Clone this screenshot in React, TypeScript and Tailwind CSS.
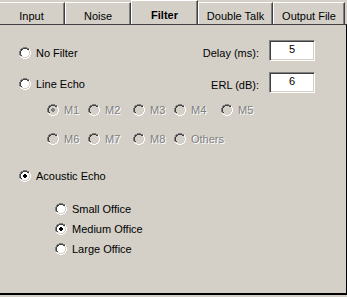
import React from "react"

const FONT = { fontFamily: '"Liberation Sans", Arial, sans-serif' }

// classic 12x12 radio bitmap
const RADIO_MAP = [
  "....DDDD....",
  "..DDKKKKDD..",
  ".DKKFFFFKKW.",
  ".DKFFFFFFLW.",
  "DKFFFFFFFFLW",
  "DKFFFFFFFFLW",
  "DKFFFFFFFFLW",
  "DKFFFFFFFFLW",
  ".DKFFFFFFLW.",
  ".WLLFFFFLLW.",
  "..WWLLLLWW..",
  "....WWWW....",
]

const DOT = [
  [5, 4], [6, 4],
  [4, 5], [5, 5], [6, 5], [7, 5],
  [4, 6], [5, 6], [6, 6], [7, 6],
  [5, 7], [6, 7],
]

function RadioIcon({ checked, disabled }: { checked?: boolean; disabled?: boolean }) {
  const colors: Record<string, string> = {
    D: "#808080",
    K: "#404040",
    W: "#ffffff",
    L: "#d4d0c8",
    F: disabled ? "#d4d0c8" : "#ffffff",
  }
  const rects: React.ReactNode[] = []
  RADIO_MAP.forEach((row, y) => {
    row.split("").forEach((c, x) => {
      if (c !== ".") rects.push(<rect key={`${x}-${y}`} x={x} y={y} width={1} height={1} fill={colors[c]} />)
    })
  })
  return (
    <svg width={12} height={12} viewBox="0 0 12 12" shapeRendering="crispEdges" className="shrink-0">
      {rects}
      {checked &&
        DOT.map(([x, y]) => (
          <rect key={`d${x}-${y}`} x={x} y={y} width={1} height={1} fill={disabled ? "#808080" : "#000000"} />
        ))}
    </svg>
  )
}

function Radio({ label, checked, disabled, width }: { label: string; checked?: boolean; disabled?: boolean; width?: string }) {
  return (
    <div className={`flex items-center gap-[5px] h-[12px] ${width ?? ""}`}>
      <RadioIcon checked={checked} disabled={disabled} />
      <span
        className={`text-[11px] leading-[12px] whitespace-nowrap ${disabled ? "text-[#808080] [text-shadow:1px_1px_0_#ffffff]" : "text-black"}`}
      >
        {label}
      </span>
    </div>
  )
}

function NumberField({ label, value }: { label: string; value: string }) {
  return (
    <div className="flex items-start gap-[10px]">
      <span className="text-[11px] leading-[12px] mt-[7px] text-black">{label}</span>
      <div className="w-[46px] h-[21px] bg-white border border-t-[#808080] border-l-[#808080] border-b-white border-r-white shadow-[inset_1px_1px_0_#404040,inset_-1px_-1px_0_#d4d0c8] flex items-center justify-center text-[11px] text-black pb-[2px]">
        {value}
      </div>
    </div>
  )
}

const tabs = [
  { label: "Input", w: "w-[67px] -ml-[2px]" },
  { label: "Noise", w: "w-[66px]" },
  { label: "Filter", w: "w-[67px]", active: true },
  { label: "Double Talk", w: "w-[75px]" },
  { label: "Output File", w: "w-[72px]" },
]

export default function App() {
  return (
    <div className="w-[347px] h-[297px] bg-[#d4d0c8] overflow-hidden flex flex-col select-none" style={FONT}>
      {/* Tabs */}
      <div className="flex items-end h-[24px]">
        {tabs.map((t) => (
          <div
            key={t.label}
            className={`${t.w} ${t.active ? "h-[24px] font-bold" : "h-[22px]"} shrink-0 border-t border-l border-t-white border-l-white border-r border-r-[#404040] shadow-[inset_-1px_0_0_#808080] flex items-center justify-center pt-[4px] text-[11px] leading-[12px] text-black`}
          >
            {t.label}
          </div>
        ))}
      </div>

      {/* Page body */}
      <div className="h-[271px] border-t border-t-[#404040] border-r border-r-black border-b-2 border-b-black pl-[19px] pr-[31px] pt-[15px] flex flex-col">
        <div className="flex items-start justify-between h-[21px]">
          <div className="mt-[7px]">
            <Radio label="No Filter" />
          </div>
          <NumberField label="Delay (ms):" value="5" />
        </div>

        <div className="flex items-start justify-between h-[21px] mt-[11px]">
          <div className="mt-[6px]">
            <Radio label="Line Echo" />
          </div>
          <NumberField label="ERL (dB):" value="6" />
        </div>

        <div className="flex pl-[28px] mt-[11px]">
          <Radio label="M1" checked disabled width="w-[41px]" />
          <Radio label="M2" disabled width="w-[45px]" />
          <Radio label="M3" disabled width="w-[41px]" />
          <Radio label="M4" disabled width="w-[47px]" />
          <Radio label="M5" disabled />
        </div>

        <div className="flex pl-[28px] mt-[17px]">
          <Radio label="M6" disabled width="w-[41px]" />
          <Radio label="M7" disabled width="w-[45px]" />
          <Radio label="M8" disabled width="w-[41px]" />
          <Radio label="Others" disabled />
        </div>

        <div className="mt-[25px]">
          <Radio label="Acoustic Echo" checked />
        </div>

        <div className="flex flex-col gap-[8px] pl-[36px] mt-[21px]">
          <Radio label="Small Office" />
          <Radio label="Medium Office" checked />
          <Radio label="Large Office" />
        </div>
      </div>
    </div>
  )
}
